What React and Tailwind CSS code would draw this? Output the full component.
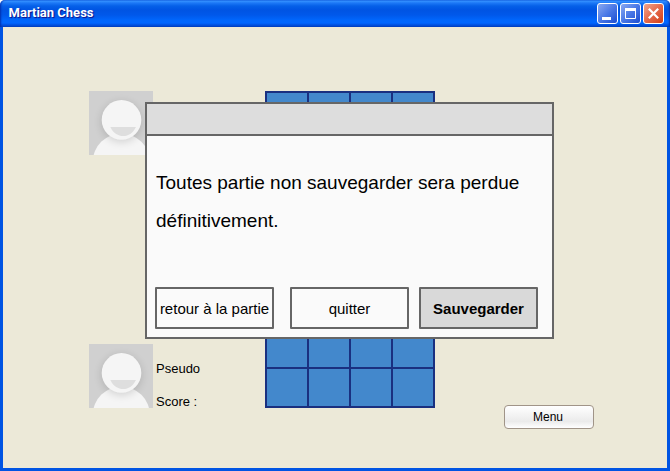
function Avatar({ id }) {
  return (
    <svg width="64" height="64" viewBox="0 0 64 64" className="block shrink-0">
      <defs>
        <filter id={`${id}-blur`} x="-50%" y="-50%" width="200%" height="200%">
          <feGaussianBlur stdDeviation="4" />
        </filter>
        <clipPath id={`${id}-frame`}>
          <rect width="64" height="64" />
        </clipPath>
      </defs>
      <g clipPath={`url(#${id}-frame)`}>
        <rect width="64" height="64" fill="#d0d0d0" />
        <circle cx="32.3" cy="71" r="28.5" fill="#f5f5f5" />
        <circle cx="32.5" cy="31" r="20" fill="#000" opacity="0.14" filter={`url(#${id}-blur)`} />
        <circle cx="32.5" cy="28.9" r="19.8" fill="#f5f5f5" />
        <path d="M21.3 36H47C43.5 42.5 39.5 45 34.3 45S24.5 42.5 21.3 36Z" fill="#dedede" />
      </g>
    </svg>
  );
}

function WindowButton({ children, tone }) {
  return (
    <div className={`flex h-[21px] w-[21px] items-center justify-center rounded-[3px] border border-white ${tone}`}>
      <svg width="19" height="19" viewBox="0 0 19 19" fill="none" stroke="#fff" className="shrink-0">
        {children}
      </svg>
    </div>
  );
}

const blue = "bg-linear-to-br from-[#8aa8f0] via-[#4a78e6] to-[#1c4cd0]";
const red = "bg-linear-to-br from-[#f0a48c] via-[#e4694a] to-[#d23c0c]";

function TitleBar() {
  return (
    <header className="flex h-[27px] shrink-0 items-center justify-between rounded-t-[5px] bg-[linear-gradient(180deg,#1468e8_0px,#3592ff_1px,#1c78f6_3px,#0560e8_6px,#0054e3_10px,#0058ea_15px,#0066fc_20px,#0066ff_23px,#0050e0_25px,#0040c0_27px)] pr-[6px] pl-[8.6px] shadow-[inset_2px_0_2px_-1px_#0030b0,inset_-2px_0_2px_-1px_#0030b0]">
      <h1 className="pb-[2px] font-[family-name:Roboto,sans-serif] text-[13px] leading-[25px] font-bold text-white [text-shadow:1px_1px_1px_#0f1089]">Martian Chess</h1>
      <div className="flex gap-[2px]">
        <WindowButton tone={blue}>
          <path d="M4 14.5H13" strokeWidth="3" />
        </WindowButton>
        <WindowButton tone={blue}>
          <path d="M4.5 4V14.5H14.5V4" />
          <path d="M4 5.5H15" strokeWidth="3" />
        </WindowButton>
        <WindowButton tone={red}>
          <path d="M4.8 4.8L14.2 14.2M14.2 4.8L4.8 14.2" strokeWidth="2.2" />
        </WindowButton>
      </div>
    </header>
  );
}

function Board() {
  return (
    <div className="grid h-[317px] w-[170px] grid-cols-4 grid-rows-8 gap-[2px] border-2 border-[#1a3080] bg-[#1a3080]">
      {Array.from({ length: 32 }, (_, i) => (
        <div key={i} className="bg-[#4388cc]" />
      ))}
    </div>
  );
}

function Dialog() {
  return (
    <section className="absolute top-[102px] left-[145px] flex h-[237px] w-[409px] flex-col border-2 border-[#666] bg-[#fafafa]">
      <div className="h-[32px] shrink-0 border-b-2 border-[#666] bg-[#ddd]" />
      <p className="mt-[28px] ml-[9px] text-[19px] leading-[38px] whitespace-nowrap">
        Toutes partie non sauvegarder sera perdue
        <br />
        définitivement.
      </p>
      <div className="mt-auto mb-[8px] ml-[8px] flex text-[15px]">
        <button className="h-[42px] w-[119px] rounded-[1px] border-2 border-[#666] pt-[2px] whitespace-nowrap">retour à la partie</button>
        <button className="ml-[16px] h-[42px] w-[119px] rounded-[1px] border-2 border-[#666] pt-[2px]">quitter</button>
        <button className="ml-[10px] h-[42px] w-[119px] rounded-[1px] border-2 border-[#666] bg-[#d9d9d9] pt-[2px] font-bold">Sauvegarder</button>
      </div>
    </section>
  );
}

export default function App() {
  return (
    <div className="relative flex h-[471px] w-[670px] flex-col overflow-hidden bg-white font-['Liberation_Sans',sans-serif] text-black">
      <TitleBar />
      <main className="flex flex-1 items-start border-x-[3px] border-b-[3px] border-[#0054e3] bg-[#ece9d8] pt-[64px]">
        <div className="ml-[86px] flex h-[317px] w-[176px] flex-col justify-between">
          <Avatar id="opponent" />
          <div className="flex h-[64px]">
            <Avatar id="player" />
            <div className="ml-[3px] flex flex-col pt-[8px] text-[13px] leading-[33px]">
              <span>Pseudo</span>
              <span>Score :</span>
            </div>
          </div>
        </div>
        <Board />
        <button className="mt-[314px] ml-[69px] h-[24px] w-[90px] rounded-[4px] border border-[#a09488] bg-linear-to-b from-white via-[#ebebeb] via-70% to-white pr-[2px] text-[12px]">Menu</button>
      </main>
      <Dialog />
    </div>
  );
}
